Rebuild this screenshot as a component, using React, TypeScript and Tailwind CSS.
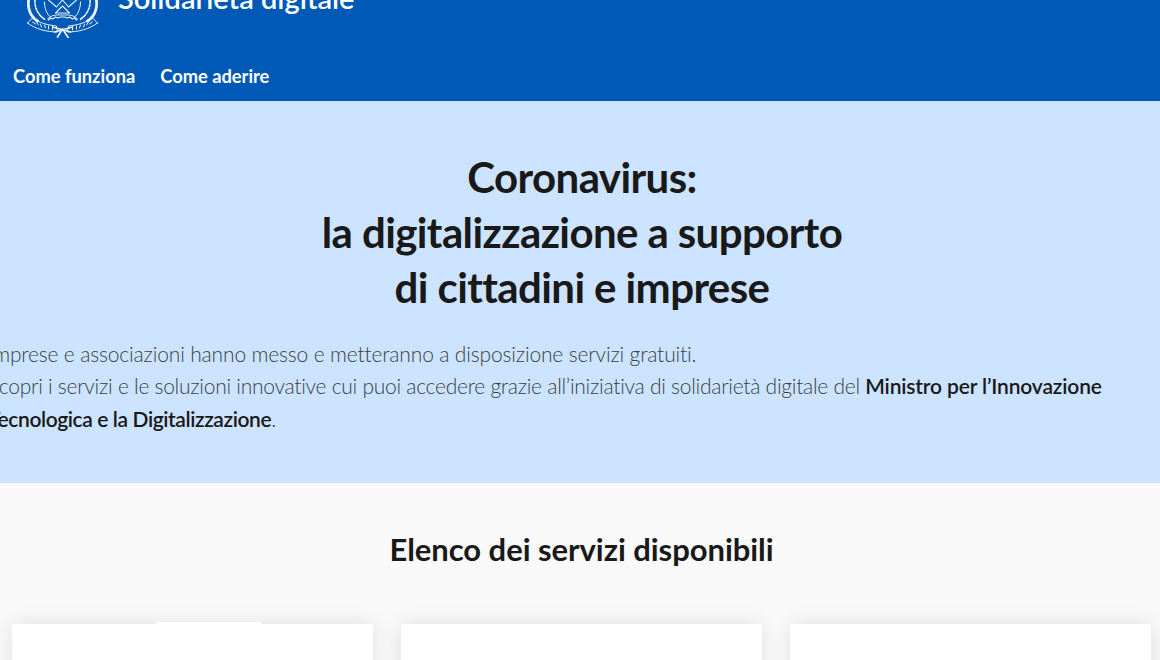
const emblem = (
  <svg width="76" height="60" viewBox="0 0 76 60" fill="none" stroke="#fff" strokeLinecap="round" strokeLinejoin="round" className="shrink-0">
    <g transform="translate(-1.5 0)" opacity="0.92">
      <path d="M24 22 L32 29 L38 22 L44 29 L52 22" strokeWidth="1.1" />
      <path d="M38 28 L45 35 L31 35 Z" strokeWidth="1.1" />
      <path d="M20 24 C20 30 22 36 26 39" strokeWidth="1" />
      <path d="M56 24 C56 30 54 36 50 39" strokeWidth="1" />
      <path d="M23 41 C28 36 33 37 38 37 C43 37 48 36 53 41" strokeWidth="1" />
      <path d="M24 42 l2 -2 l2 1 l3 -2 l2 1 l3 -1 l4 0 l3 1 l2 -1 l3 2 l2 -1 l2 2" strokeWidth="1.2" />
      <path d="M5 18 C2 28 5 38 13 43" strokeWidth="2.8" strokeDasharray="3 1.2" />
      <path d="M71 18 C74 28 71 38 63 43" strokeWidth="2.8" strokeDasharray="3 1.2" />
      <path d="M11 18 C9 27 12 36 21 42" strokeWidth="1.6" strokeDasharray="2.5 1.5" />
      <path d="M65 18 C67 27 64 36 55 42" strokeWidth="1.6" strokeDasharray="2.5 1.5" />
      <path d="M3 45 L8 40 C15 45 23 47 32 48 L33 54 C22 54 11 51 3 45 Z" strokeWidth="1" />
      <path d="M73 45 L68 40 C61 45 53 47 44 48 L43 54 C54 54 65 51 73 45 Z" strokeWidth="1" />
      <path d="M8 44 L11 46 M12 44 L14 47 M16 46 L17 49 M20 47 L21 50 M24 48 L24 51 M28 49 L28 52 M48 49 L48 52 M52 48 L52 51 M56 47 L55 50 M60 46 L59 49 M64 44 L62 47 M68 44 L65 46" strokeWidth="1" />
      <path d="M28 49 L46 54 M48 49 L30 54 M38 51 L33 59 M38 51 L44 60" strokeWidth="1.7" />
    </g>
  </svg>
);

export default function App() {
  return (
    <div className="w-[1160px] h-[660px] overflow-hidden bg-[#f9f9f9] font-['Lato',sans-serif]">
      <header className="h-[101px] bg-[#0059b6] text-white overflow-hidden">
        <div className="flex items-start mt-[-22px] ml-[26px]">
          {emblem}
          <h1 className="ml-[16px] mt-[0px] text-[29px] leading-[40px] font-semibold whitespace-nowrap">Solidarietà digitale</h1>
        </div>
        <nav className="flex gap-[25px] ml-[13px] mt-[24px] text-[18.3px] leading-[28px] font-bold">
          <a>Come funziona</a>
          <a>Come aderire</a>
        </nav>
      </header>
      <section className="h-[382px] bg-[#cce4ff] text-[#19191a] overflow-hidden">
        <h2 className="mt-[49px] ml-[4px] text-center text-[42px] leading-[55px] font-bold tracking-[-0.6px]">
          Coronavirus:<br />la digitalizzazione a supporto<br />di cittadini e imprese
        </h2>
        <div className="mt-[23px] ml-[-12px] text-[21px] leading-[32px] font-light text-[#3a3f45] tracking-[-0.27px] whitespace-nowrap">
          <p className="tracking-[-0.16px]">Imprese e associazioni hanno messo e metteranno a disposizione servizi gratuiti.</p>
          <p>Scopri i servizi e le soluzioni innovative cui puoi accedere grazie all’iniziativa di solidarietà digitale del <strong className="font-semibold text-[#19191a] tracking-[-0.15px]">Ministro per l’Innovazione</strong></p>
          <p className="mt-[1px]"><strong className="font-semibold text-[#19191a] tracking-[-0.4px]">Tecnologica e la Digitalizzazione</strong>.</p>
        </div>
      </section>
      <section className="pt-[44px]">
        <h2 className="ml-[3px] text-center text-[31px] leading-[44px] font-bold text-[#19191a] tracking-[-0.05px]">Elenco dei servizi disponibili</h2>
        <div className="mt-[53px] ml-[12px] flex gap-[28px]">
          <div className="w-[361px] h-[80px] bg-white shadow-[0_0_20px_rgba(0,0,0,0.1)]">
            <div className="mt-[-2px] ml-[144px] w-[105px] h-[10px] bg-white" />
          </div>
          <div className="w-[361px] h-[80px] bg-white shadow-[0_0_20px_rgba(0,0,0,0.1)]" />
          <div className="w-[361px] h-[80px] bg-white shadow-[0_0_20px_rgba(0,0,0,0.1)]" />
        </div>
      </section>
    </div>
  );
}
